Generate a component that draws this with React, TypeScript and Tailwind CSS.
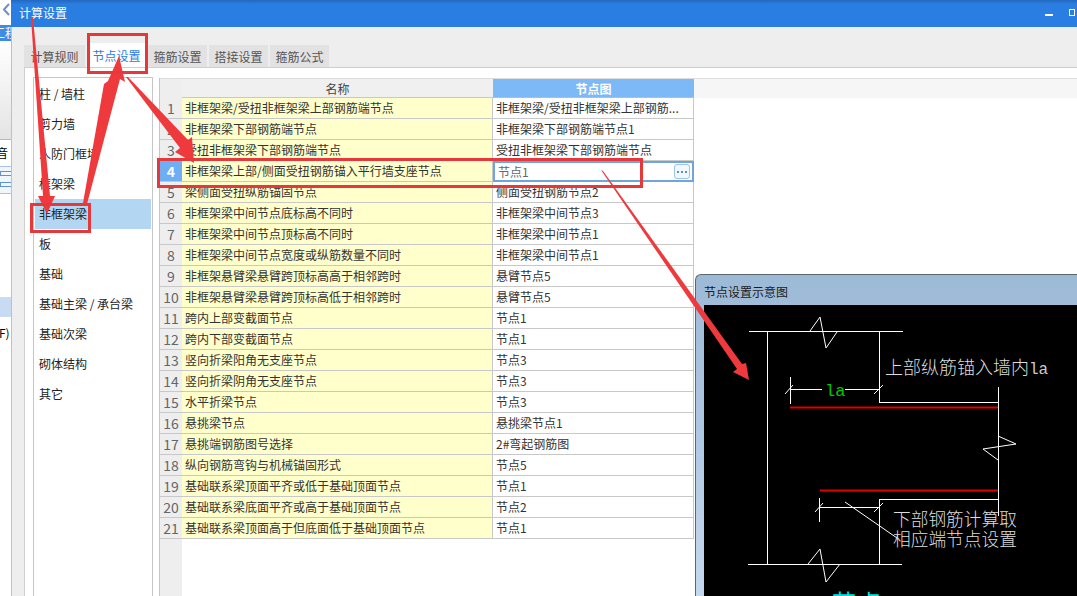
const categories = [
  "柱 / 墙柱",
  "剪力墙",
  "人防门框墙",
  "框架梁",
  "非框架梁",
  "板",
  "基础",
  "基础主梁 / 承台梁",
  "基础次梁",
  "砌体结构",
  "其它",
];

const tabs = [
  { label: "计算规则", width: "w-[61px]" },
  { label: "节点设置", width: "w-[59px]" },
  { label: "箍筋设置", width: "w-[59px]" },
  { label: "搭接设置", width: "w-[59px]" },
  { label: "箍筋公式", width: "w-[59px]" },
];

const rows = [
  ["非框架梁/受扭非框架梁上部钢筋端节点", "非框架梁/受扭非框架梁上部钢筋..."],
  ["非框架梁下部钢筋端节点", "非框架梁下部钢筋端节点1"],
  ["受扭非框架梁下部钢筋端节点", "受扭非框架梁下部钢筋端节点"],
  ["非框架梁上部/侧面受扭钢筋锚入平行墙支座节点", "节点1"],
  ["梁侧面受扭纵筋锚固节点", "侧面受扭钢筋节点2"],
  ["非框架梁中间节点底标高不同时", "非框架梁中间节点3"],
  ["非框架梁中间节点顶标高不同时", "非框架梁中间节点1"],
  ["非框架梁中间节点宽度或纵筋数量不同时", "非框架梁中间节点1"],
  ["非框架悬臂梁悬臂跨顶标高高于相邻跨时", "悬臂节点5"],
  ["非框架悬臂梁悬臂跨顶标高低于相邻跨时", "悬臂节点5"],
  ["跨内上部变截面节点", "节点1"],
  ["跨内下部变截面节点", "节点1"],
  ["竖向折梁阳角无支座节点", "节点3"],
  ["竖向折梁阴角无支座节点", "节点3"],
  ["水平折梁节点", "节点3"],
  ["悬挑梁节点", "悬挑梁节点1"],
  ["悬挑端钢筋图号选择", "2#弯起钢筋图"],
  ["纵向钢筋弯钩与机械锚固形式", "节点5"],
  ["基础联系梁顶面平齐或低于基础顶面节点", "节点1"],
  ["基础联系梁底面平齐或高于基础顶面节点", "节点2"],
  ["基础联系梁顶面高于但底面低于基础顶面节点", "节点1"],
];

const LeftStrip = () => (
  <div className="flex w-[11px] shrink-0 flex-col overflow-hidden bg-white text-[12px] text-black">
    <div className="h-[25px] pt-[3px] leading-none">
      <svg width="11" height="16" viewBox="0 0 11 16">
        <path d="M9 1 L4 6.5 L9 12" fill="none" stroke="#6f8fc7" strokeWidth="2" />
      </svg>
    </div>
    <div className="h-[16px] bg-[#3b8de4] leading-[16px] whitespace-nowrap text-white">
      <span className="block -ml-[7px]">工程</span>
    </div>
    <div className="h-[99px] border-b border-[#b8b8b8] bg-gradient-to-b from-white to-[#e4e4e4]" />
    <div className="h-[26px] leading-[26px] whitespace-nowrap">
      <span className="block -ml-[4px]">音</span>
    </div>
    <div className="flex h-[28px] flex-col gap-[6px] border-y border-[#a9c3e3] bg-[#f1f6fc] pt-[4px]">
      <div className="h-[5px] w-[11px] border-y border-l border-[#5f93cf]" />
      <div className="h-[5px] w-[11px] border-y border-l border-[#5f93cf]" />
    </div>
    <div className="h-[103px]" />
    <div className="h-[20px] bg-[#c9daf3]" />
    <div className="h-[8px]" />
    <div className="-ml-[1px] leading-[16px] whitespace-nowrap">F)</div>
  </div>
);

const Tabs = () => (
  <div className="flex h-[23px] items-end gap-[2px]">
    {tabs.map(({ label, width }) =>
      label === "节点设置" ? (
        <div
          key={label}
          className={`${width} h-[24px] bg-white text-center text-[12px] leading-[25px] text-[#2a7de1]`}
        >
          {label}
        </div>
      ) : (
        <div
          key={label}
          className={`${width} h-[22px] bg-[#e2e2e2] text-center text-[12px] leading-[23px] text-[#555]`}
        >
          {label}
        </div>
      ),
    )}
  </div>
);

const CategoryList = () => (
  <div className="h-[530px] w-[120px] shrink-0 border border-[#c6c6c6] bg-white px-[1px] pt-[1px]">
    {categories.map((name) => (
      <div
        key={name}
        className={
          name === "非框架梁"
            ? "h-[30px] bg-[#b3d7f3] pl-[4px] text-[12px] leading-[30px] text-[#222]"
            : "h-[30px] pl-[4px] text-[12px] leading-[30px] text-[#222]"
        }
      >
        {name}
      </div>
    ))}
  </div>
);

const Row = ({ no, name, node }: { no: number; name: string; node: string }) => {
  const active = no === 4;
  return (
    <div className="flex h-[21px] text-[12px] leading-[20px] text-[#333]">
      <div
        className={
          active
            ? "w-[22px] shrink-0 border-b border-[#c8c8c8] bg-[#6eaef5] text-center text-[14px] font-bold text-white"
            : "w-[22px] shrink-0 border-b border-[#c8c8c8] bg-[#eeeeee] text-center text-[14px] text-[#666]"
        }
      >
        {no}
      </div>
      <div className="w-[311px] shrink-0 border-r border-b border-[#c8c8c8] bg-[#ffffcc] pl-[3px] whitespace-nowrap">
        {name}
      </div>
      {active ? (
        <div className="flex w-[201px] shrink-0 items-center justify-between border-2 border-[#6fa5dd] pr-[2px] pl-[3px] text-[#666]">
          <span>{node}</span>
          <span className="flex h-[15px] w-[16px] items-center justify-center gap-[2px] rounded-[3px] border border-[#9cc3e8] bg-[#f2f8fe]">
            <i className="block h-[2px] w-[2px] bg-[#5f8fc0]" />
            <i className="block h-[2px] w-[2px] bg-[#5f8fc0]" />
            <i className="block h-[2px] w-[2px] bg-[#5f8fc0]" />
          </span>
        </div>
      ) : (
        <div className="w-[201px] shrink-0 border-r border-b border-[#c8c8c8] pl-[3px] whitespace-nowrap">
          {node}
        </div>
      )}
    </div>
  );
};

const NodeTable = () => (
  <div className="mt-[1px] flex-1 overflow-hidden border-l border-[#c6c6c6]">
    <div className="flex h-[20px] border-t border-[#dcdcdc] bg-[#f6f6f6] text-[12px] leading-[19px]">
      <div className="w-[22px] shrink-0 bg-[#eeeeee]" />
      <div className="w-[311px] shrink-0 border-b border-[#c8c8c8] bg-[#f0f0f0] text-center text-[#444]">
        名称
      </div>
      <div className="w-[201px] shrink-0 border-b border-[#9cc3e8] bg-[#7db8f7] text-center font-bold text-white">
        节点图
      </div>
    </div>
    {rows.map(([name, node], i) => (
      <Row key={name} no={i + 1} name={name} node={node} />
    ))}
    <div className="h-[60px] w-[22px] bg-[#eeeeee]" />
  </div>
);

const lines: [number, number, number, number][] = [
  [749, 331.5, 903, 331.5],
  [767.5, 331, 767.5, 564],
  [879.5, 331, 879.5, 403],
  [879, 402.5, 998, 402.5],
  [998.5, 387, 998.5, 516],
  [879, 499.5, 998, 499.5],
  [879.5, 499, 879.5, 564],
  [748, 564.5, 902, 564.5],
  [790.5, 377, 790.5, 404],
  [790, 389.5, 822, 389.5],
  [845, 389.5, 880, 389.5],
  [785, 394, 793, 385],
  [874, 394, 883, 385],
  [819.5, 498, 819.5, 522],
  [819, 507.5, 879, 507.5],
  [815, 512, 823, 503],
  [874, 512, 883, 503],
  [845, 502, 897, 538],
];

const Diagram = () => (
  <svg
    viewBox="704 305 373 291"
    className="block h-[291px] w-[373px] bg-black font-['Liberation_Mono','Noto_Sans_CJK_SC',monospace]"
  >
    {lines.map(([x1, y1, x2, y2]) => (
      <line key={`${x1}-${y1}-${x2}`} x1={x1} y1={y1} x2={x2} y2={y2} stroke="#fff" strokeWidth="1" />
    ))}
    <polyline points="810,331 820,317 826,348 837,332" fill="none" stroke="#fff" />
    <polyline points="808,564 820,549 826,582 840,564" fill="none" stroke="#fff" />
    <polyline points="998,436 1016,444 983,449 998,460" fill="none" stroke="#fff" />
    <line x1="790" y1="407.5" x2="998" y2="407.5" stroke="#e00000" strokeWidth="2" />
    <line x1="820" y1="490.5" x2="998" y2="490.5" stroke="#e00000" strokeWidth="2" />
    <text x="825" y="396" fill="#00c800" fontSize="17">la</text>
    <text x="885" y="374" fill="#dddddd" fontSize="18" fontWeight="300">上部纵筋锚入墙内</text>
    <text x="1029" y="374" fill="#cccccc" fontSize="16">la</text>
    <text x="893" y="526" fill="#dddddd" fontSize="17.7" fontWeight="300">下部钢筋计算取</text>
    <text x="893" y="546" fill="#dddddd" fontSize="17.7" fontWeight="300">相应端节点设置</text>
    <text x="832" y="612" fill="#00dede" fontSize="24" letterSpacing="1">节点</text>
  </svg>
);

const NodeDialog = () => (
  <div className="absolute top-[274px] left-[695px] h-[322px] w-[382px] overflow-hidden rounded-tl-[6px] border-t border-l border-[#5c6670] bg-gradient-to-b from-[#9cb9d6] to-[#c4d9ef]">
    <div className="h-[30px] pl-[8px] text-[12px] leading-[34px] text-[#1a1a1a]">节点设置示意图</div>
    <div className="pl-[8px]">
      <Diagram />
    </div>
  </div>
);

// 截图上画的红色标注
const Annotations = () => (
  <svg viewBox="0 0 1077 596" className="pointer-events-none absolute top-0 left-0 h-[596px] w-[1077px]">
    <g fill="#ee3a3c">
      <polygon points="31,18 33,18 50,196 55,196 47,214 38,196 43,196" />
      <polygon points="83,203 104,84 108,81 119,56 125,82 120,79 87,204" />
      <polygon points="126,77 128,77 188,140 192,137 194,163 175,152 180,148" />
      <polygon points="601,170 603,171 742,364 746,363 749,380 733,372 737,369" />
    </g>
    <g fill="none" stroke="#e5383b" strokeWidth="3">
      <rect x="88.5" y="34.5" width="58" height="38" />
      <rect x="158.5" y="159.5" width="483" height="27" />
      <rect x="31.5" y="204.5" width="58" height="27" />
    </g>
  </svg>
);

export default function App() {
  return (
    <div className="relative flex h-[596px] w-[1077px] overflow-hidden bg-white font-['Noto_Sans_CJK_SC','Liberation_Sans',sans-serif]">
      <LeftStrip />
      <div className="flex min-w-0 flex-1 flex-col">
        <div className="flex h-[27px] shrink-0 items-center justify-between bg-gradient-to-b from-[#2368bd] via-[#2a7de1] via-[15%] to-[#2a7de1] pr-[2px] pl-[8px] text-[12px] text-white">
          <span className="-mt-[1px]">计算设置</span>
          <span className="flex items-center gap-[16px]">
            <i className="mt-[3px] block h-[2px] w-[8px] bg-white" />
            <i className="mb-[3px] block h-[7px] w-[6px] border border-white" />
          </span>
        </div>
        <div className="flex min-h-0 flex-1 flex-col border-l border-[#c0c0c0] bg-[#eeeeee] pt-[17px] pl-[12px]">
          <Tabs />
          <div className="flex flex-1 gap-[6px] border-t border-l border-[#cfcfcf] bg-white pt-[9px] pl-[8px]">
            <CategoryList />
            <NodeTable />
          </div>
        </div>
      </div>
      <NodeDialog />
      <Annotations />
    </div>
  );
}
